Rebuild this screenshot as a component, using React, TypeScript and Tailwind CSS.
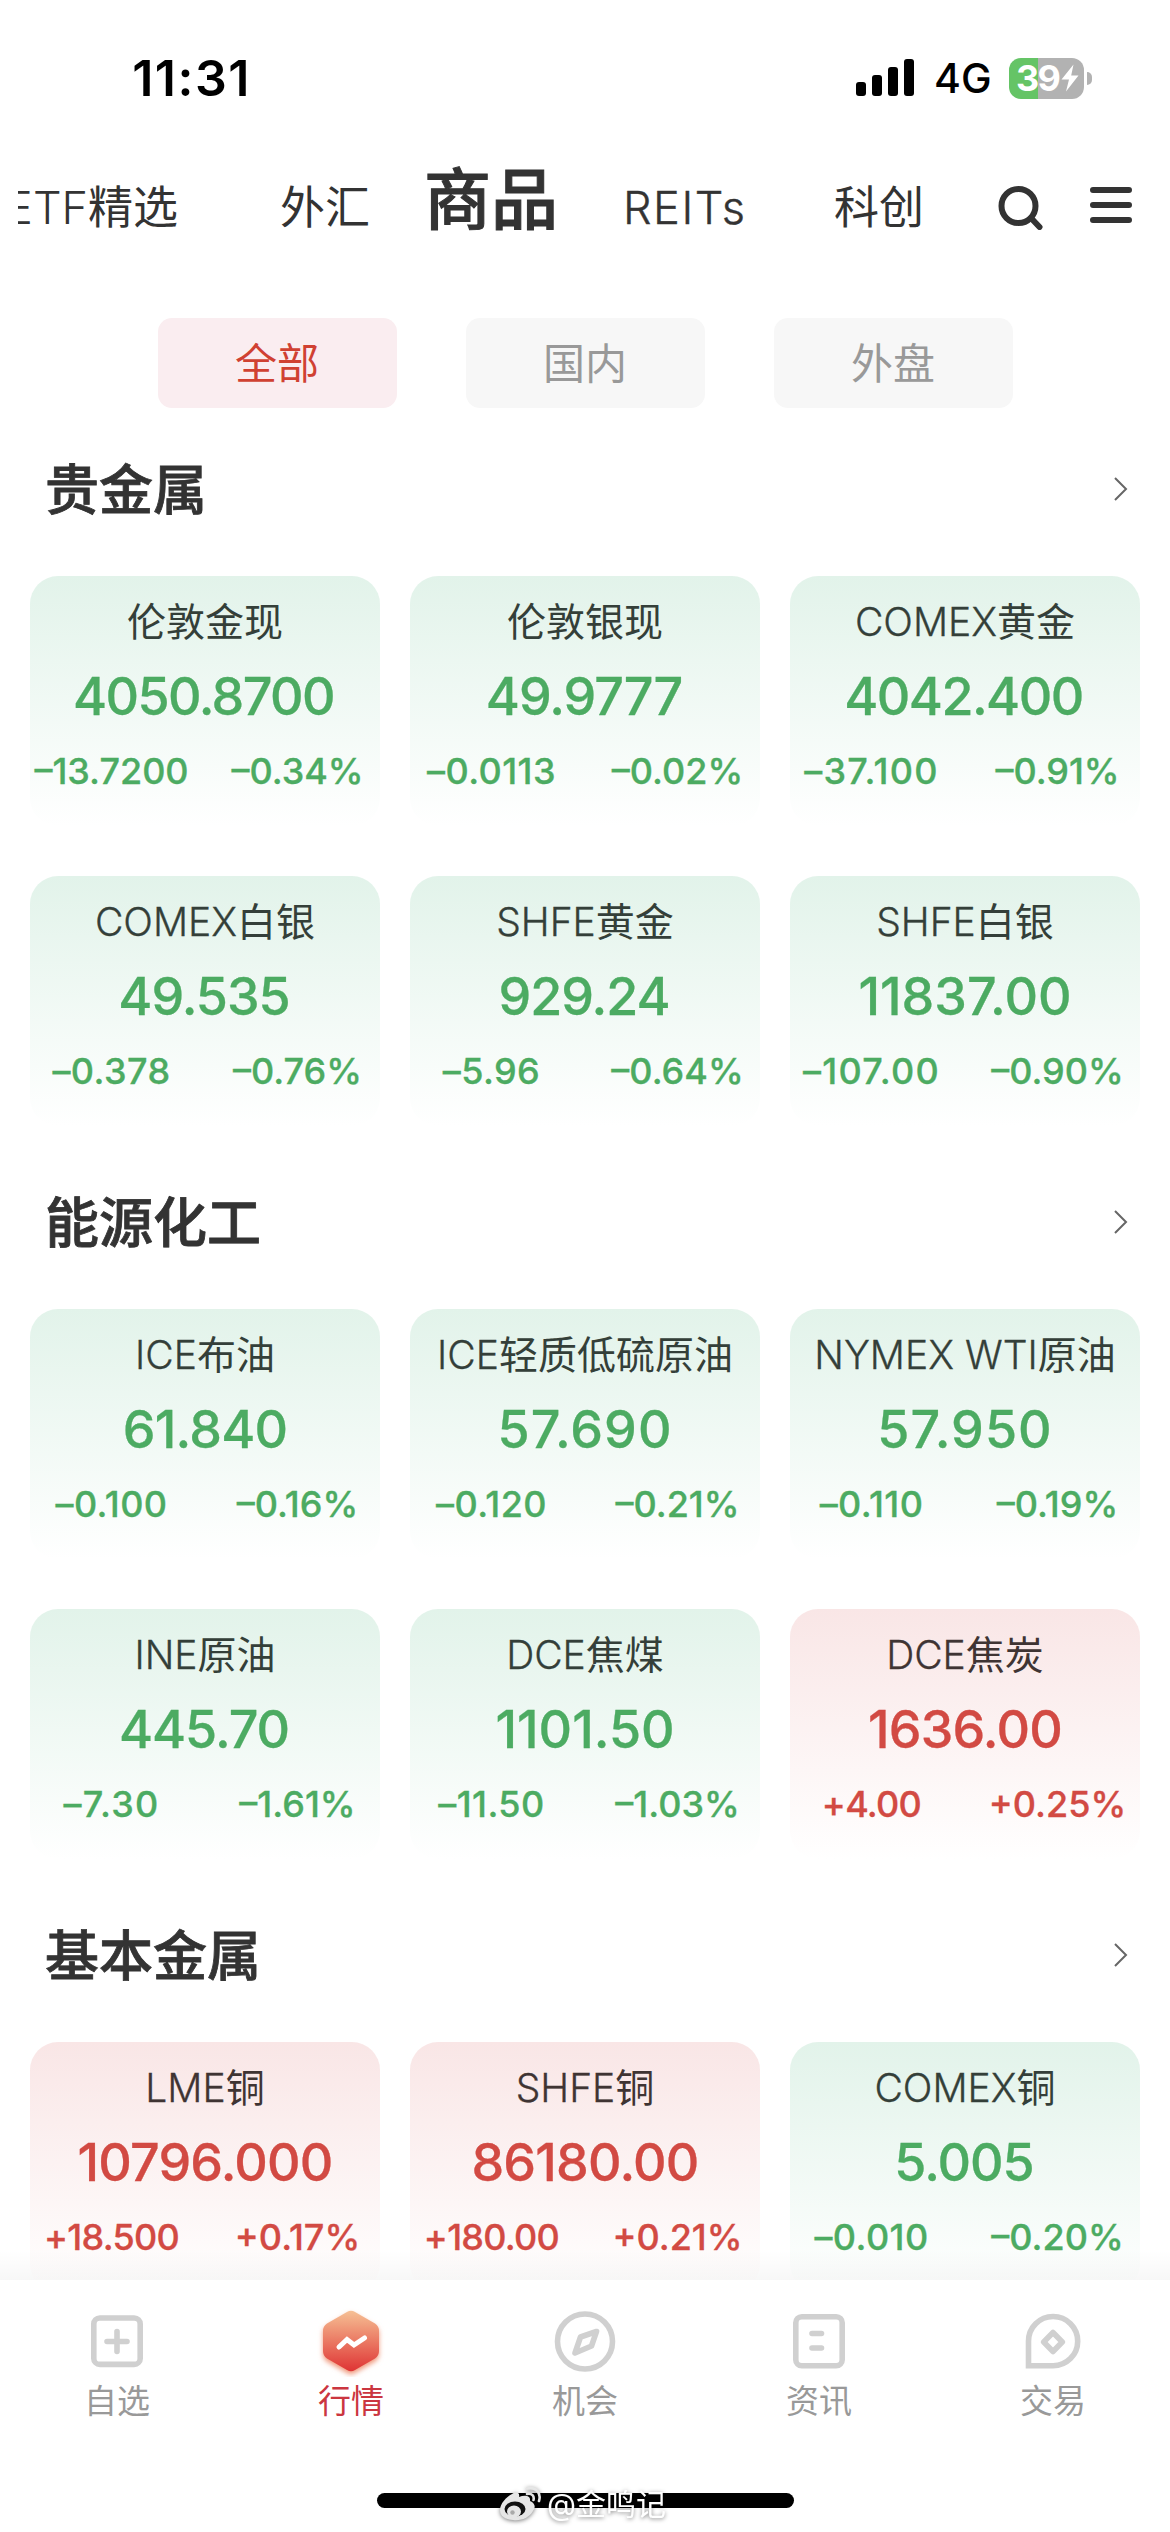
import type { ReactNode } from "react";
import clsx from "clsx";

interface Quote {
  name: string;
  price: string;
  change: string;
  percent: string;
}

interface Section {
  title: string;
  quotes: Quote[];
}

const tabs = ["全部", "国内", "外盘"];

const sections: Section[] = [
  {
    title: "贵金属",
    quotes: [
      { name: "伦敦金现", price: "4050.8700", change: "–13.7200", percent: "–0.34%" },
      { name: "伦敦银现", price: "49.9777", change: "–0.0113", percent: "–0.02%" },
      { name: "COMEX黄金", price: "4042.400", change: "–37.100", percent: "–0.91%" },
      { name: "COMEX白银", price: "49.535", change: "–0.378", percent: "–0.76%" },
      { name: "SHFE黄金", price: "929.24", change: "–5.96", percent: "–0.64%" },
      { name: "SHFE白银", price: "11837.00", change: "–107.00", percent: "–0.90%" },
    ],
  },
  {
    title: "能源化工",
    quotes: [
      { name: "ICE布油", price: "61.840", change: "–0.100", percent: "–0.16%" },
      { name: "ICE轻质低硫原油", price: "57.690", change: "–0.120", percent: "–0.21%" },
      { name: "NYMEX WTI原油", price: "57.950", change: "–0.110", percent: "–0.19%" },
      { name: "INE原油", price: "445.70", change: "–7.30", percent: "–1.61%" },
      { name: "DCE焦煤", price: "1101.50", change: "–11.50", percent: "–1.03%" },
      { name: "DCE焦炭", price: "1636.00", change: "+4.00", percent: "+0.25%" },
    ],
  },
  {
    title: "基本金属",
    quotes: [
      { name: "LME铜", price: "10796.000", change: "+18.500", percent: "+0.17%" },
      { name: "SHFE铜", price: "86180.00", change: "+180.00", percent: "+0.21%" },
      { name: "COMEX铜", price: "5.005", change: "–0.010", percent: "–0.20%" },
    ],
  },
];

// Los "1" son estrechos y "7." ya viene muy junto, así que esas cifras llevan menos ajuste
function priceTracking(value: string) {
  const ones = value.split("1").length - 1;
  if (value.includes("7.") && ones === 0) return "tracking-[0.02em]";
  if (value.length > 7 && ones === 0) return "-ml-[3px] tracking-[-0.03em]";
  if (ones === 0) return "-ml-[2px] tracking-[-0.02em]";
  if (ones === 1) return "tracking-[-0.015em]";
  return "tracking-normal";
}

function changeTracking(value: string) {
  if (value.startsWith("+")) return "tracking-[-0.02em]";
  if (value.includes("7.")) return "tracking-[0.035em]";
  if (value.length > 7) return "tracking-normal";
  return "tracking-[0.012em]";
}

function StatusBar() {
  return (
    <div className="flex h-[156px] items-center">
      <div className="w-[383px] text-center text-[50px] font-semibold tracking-[0.03em] text-black">11:31</div>
      <div className="ml-auto flex items-center pr-[78px]">
        <svg className="h-[38px] w-[58px]" viewBox="0 0 58 38">
          <rect x="0" y="23" width="10" height="14" rx="3" />
          <rect x="16" y="16" width="10" height="21" rx="3" />
          <rect x="32" y="8" width="10" height="29" rx="3" />
          <rect x="48" y="0" width="10" height="37" rx="3" />
        </svg>
        <span className="ml-[20px] w-[56px] text-[41px] font-medium leading-[41px] text-black">4G</span>
        <div className="ml-[19px] flex h-[41px] w-[75px] items-center rounded-[12px] bg-[linear-gradient(90deg,#65c466_39%,#b2b2b2_39%)] pl-[7px]">
          <span className="text-[36px] font-bold leading-[41px] tracking-[-0.05em] text-white">39</span>
          <svg className="ml-[2px] h-[28px] w-[18px] shrink-0" viewBox="0 0 18 28">
            <path d="M12.5 0.5L0.5 15.5H8L5 27.5L17.5 11.5H10.2Z" fill="#fff" />
          </svg>
        </div>
        <div className="ml-[3px] h-[13px] w-[5px] rounded-r-full bg-[#b2b2b2]" />
      </div>
    </div>
  );
}

function TopNav() {
  return (
    <div className="flex h-[102px] items-center pt-[2px] pl-[18px] text-[45px] leading-[60px] text-[#333]">
      <div className="flex w-[160px] justify-end overflow-hidden whitespace-nowrap">
        <span className="font-light">ETF</span>精选
      </div>
      <div className="ml-[102px] w-[90px]">外汇</div>
      <div className="-mt-[17px] ml-[54px] w-[136px] text-[67px] font-medium leading-[80px] [-webkit-text-stroke:1px_#333]">商品</div>
      <div className="ml-[63px] w-[124px] font-light tracking-[0.035em] [-webkit-text-stroke:0.4px_#333]">REITs</div>
      <div className="ml-[87px] w-[90px]">科创</div>
      <svg className="ml-[73px] h-[44px] w-[48px]" viewBox="0 0 48 44" fill="none" stroke="#333" strokeWidth="6" strokeLinecap="round">
        <circle cx="21.5" cy="20" r="17" />
        <path d="M34 32L42.5 41" />
      </svg>
      <svg className="ml-[44px] h-[44px] w-[44px]" viewBox="0 0 44 44" stroke="#333" strokeWidth="6" strokeLinecap="round">
        <path d="M4 4H40M4 19H40M4 34H40" />
      </svg>
    </div>
  );
}

function QuoteCard({ quote }: { quote: Quote }) {
  const isUp = quote.change.startsWith("+");
  const latin = quote.name.match(/^[A-Z ]*/)?.[0] ?? "";

  return (
    <div
      className={clsx(
        "h-[250px] rounded-[28px] pt-[16px] whitespace-nowrap",
        isUp ? "bg-linear-to-b from-[#f9e6e6] to-white" : "bg-linear-to-b from-[#e2f3ea] to-white"
      )}
    >
      <div className={clsx("text-center text-[39px] leading-[60px]", isUp ? "text-[#3f3433]" : "text-[#343f39]")}>
        <span className="font-light [-webkit-text-stroke:0.3px]">{latin}</span>
        {quote.name.slice(latin.length)}
      </div>
      <div className={clsx("font-medium [-webkit-text-stroke:0.3px]", isUp ? "text-[#d24a43]" : "text-[#4cab62]")}>
        <div className={clsx("mt-[10px] text-center text-[52px] leading-[70px]", priceTracking(quote.price))}>
          {quote.price}
        </div>
        <div className="mt-[14px] flex gap-[23px] text-[36px] leading-[50px]">
          <span className={clsx("flex w-[163px] justify-center", changeTracking(quote.change))}>{quote.change}</span>
          <span className="flex w-[163px] justify-center">{quote.percent}</span>
        </div>
      </div>
    </div>
  );
}

function NavItem({ label, active, children }: { label: string; active?: boolean; children: ReactNode }) {
  return (
    <div className="flex flex-col items-center pt-[25px]">
      <svg className="h-[72px] w-[72px]" viewBox="-36 -36 72 72" fill="none" stroke="#d0d0d0" strokeWidth="5.6" strokeLinecap="round" strokeLinejoin="round">
        {children}
      </svg>
      <span className={clsx("mt-px text-[33px] leading-[46px]", active ? "text-[#cb3640]" : "text-[#999]")}>{label}</span>
    </div>
  );
}

function BottomNav() {
  return (
    <div className="relative h-[252px] bg-white">
      {/* Sombra suave sobre la lista */}
      <div className="absolute inset-x-0 -top-[30px] h-[30px] bg-linear-to-b from-black/0 to-black/[0.03]" />
      <div className="grid grid-cols-5">
        <NavItem label="自选">
          <rect x="-23.2" y="-23" width="46.4" height="46.4" rx="6" />
          <path d="M-10 0.5H10M0 -9.5V10.5" />
        </NavItem>
        <NavItem label="行情" active>
          <defs>
            <linearGradient id="hex" x1="0" y1="0" x2="0" y2="1">
              <stop offset="0" stopColor="#f6c094" />
              <stop offset="1" stopColor="#df3434" />
            </linearGradient>
            <filter id="glow" x="-30%" y="-30%" width="160%" height="160%">
              <feGaussianBlur stdDeviation="2.4" />
            </filter>
          </defs>
          <path d="M-4 -29Q0 -31.5 4 -29L24 -17.5Q28 -15 28 -10V10Q28 15 24 17.5L4 29Q0 31.5 -4 29L-24 17.5Q-28 15 -28 10V-10Q-28 -15 -24 -17.5Z" transform="translate(0 3)" fill="#f0997d" stroke="none" filter="url(#glow)" />
          <path d="M-4 -29Q0 -31.5 4 -29L24 -17.5Q28 -15 28 -10V10Q28 15 24 17.5L4 29Q0 31.5 -4 29L-24 17.5Q-28 15 -28 10V-10Q-28 -15 -24 -17.5Z" fill="url(#hex)" stroke="none" />
          <path d="M-12 6L-4 -1.5L3 4L13.5 -3" stroke="#fff" strokeWidth="5" strokeLinejoin="miter" />
        </NavItem>
        <NavItem label="机会">
          <circle cx="0" cy="0.5" r="27.5" />
          <path d="M11.5 -9.5L-4.5 -4L-10 12L6.5 5Z" />
        </NavItem>
        <NavItem label="资讯">
          <rect x="-23.2" y="-24.2" width="46.4" height="49" rx="6" />
          <path d="M-7 -7.5H2.5M-7 7H2.5" />
        </NavItem>
        <NavItem label="交易">
          <path d="M-24.5 24.7V0.2A24.6 24.6 0 1 1 0 24.7Z" strokeLinejoin="miter" />
          <path d="M0 -8.5L9.3 1L0 10.5L-9.3 1Z" />
        </NavItem>
      </div>
      <div className="absolute top-[213px] left-[377px] h-[15px] w-[417px] rounded-full bg-black" />
      <div className="absolute top-[204px] left-[499px] flex h-[40px] items-center gap-[4px] drop-shadow-[0_1px_2px_rgba(0,0,0,0.5)]">
        <svg className="h-[36px] w-[44px]" viewBox="0 0 44 36">
          <path d="M13 8C18 5 21 7 20 11C25 9 32 9 31 15C36 17 37 21 34 25C30 32 22 35 14 34C6 33.5 1 30 1 24C1 18 7 11 13 8Z" fill="#e6e6e6" />
          <ellipse cx="16" cy="23" rx="10.5" ry="7.5" fill="#111" />
          <ellipse cx="15" cy="25.5" rx="7" ry="6" fill="#e6e6e6" />
          <circle cx="13.5" cy="26.5" r="2.2" fill="#aaa" />
          <path d="M28 8C33 7 35.5 10 34.5 14M28 2.5C37 0.5 42.5 7 40 15" fill="none" stroke="#e6e6e6" strokeWidth="2.6" strokeLinecap="round" />
        </svg>
        <span className="text-[30px] leading-[40px] whitespace-nowrap text-white">@金鸣记</span>
      </div>
    </div>
  );
}

export default function App() {
  return (
    <div className="flex h-[2532px] w-[1170px] flex-col overflow-hidden bg-white font-['Inter','Noto_Sans_CJK_SC',sans-serif]">
      <StatusBar />
      <TopNav />

      <div className="mt-[60px] flex justify-center gap-[69px]">
        {tabs.map((tab, i) => (
          <button
            key={tab}
            className={clsx(
              "h-[90px] w-[239px] rounded-[14px] text-[42px]",
              i === 0 ? "bg-[#faedf0] text-[#d04132]" : "bg-[#f7f7f7] text-[#999]"
            )}
          >
            {tab}
          </button>
        ))}
      </div>

      <div className="min-h-0 flex-1 overflow-hidden">
        {sections.map((section) => (
          <section key={section.title} className="mb-[12px] pt-[21px]">
            <div className="flex h-[120px] items-center justify-between pr-[42px] pl-[45px]">
              <h2 className="mt-[2px] text-[54px] font-medium text-[#333] [-webkit-text-stroke:0.8px_#333]">{section.title}</h2>
              <svg className="h-[24px] w-[14px]" viewBox="0 0 14 24" fill="none" stroke="#666" strokeWidth="2">
                <path d="M1 1L12 12L1 23" />
              </svg>
            </div>
            <div className="grid grid-cols-3 gap-x-[30px] gap-y-[50px] px-[30px] pt-[27px] pb-[3px]">
              {section.quotes.map((quote) => (
                <QuoteCard key={quote.name} quote={quote} />
              ))}
            </div>
          </section>
        ))}
      </div>

      <BottomNav />
    </div>
  );
}
